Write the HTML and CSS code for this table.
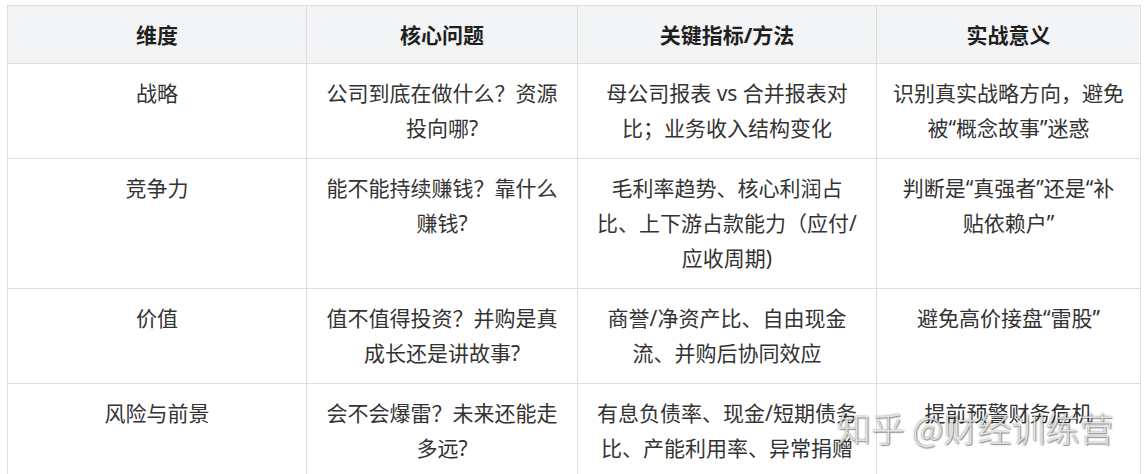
FILE: index.html
```html
<!DOCTYPE html>
<html lang="zh-CN">
<head>
<meta charset="utf-8">
<title>财务分析维度</title>
<link rel="stylesheet" href="styles.css">
</head>
<body>
<div class="page">
  <table class="grid">
    <colgroup>
      <col class="c1"><col class="c2"><col class="c3"><col class="c4">
    </colgroup>
    <thead>
      <tr><th>维度</th><th>核心问题</th><th>关键指标/方法</th><th>实战意义</th></tr>
    </thead>
    <tbody>
      <tr>
        <td>战略</td>
        <td>公司到底在做什么？资源<br>投向哪?</td>
        <td>母公司报表 vs 合并报表对<br>比；业务收入结构变化</td>
        <td>识别真实战略方向，避免<br>被“概念故事”迷惑</td>
      </tr>
      <tr>
        <td>竞争力</td>
        <td>能不能持续赚钱？靠什么<br>赚钱?</td>
        <td>毛利率趋势、核心利润占<br>比、上下游占款能力（应付/<br>应收周期)</td>
        <td>判断是“真强者”还是“补<br>贴依赖户”</td>
      </tr>
      <tr>
        <td>价值</td>
        <td>值不值得投资？并购是真<br>成长还是讲故事?</td>
        <td>商誉/净资产比、自由现金<br>流、并购后协同效应</td>
        <td>避免高价接盘“雷股”</td>
      </tr>
      <tr>
        <td>风险与前景</td>
        <td>会不会爆雷？未来还能走<br>多远?</td>
        <td>有息负债率、现金/短期债务<br>比、产能利用率、异常捐赠</td>
        <td>提前预警财务危机</td>
      </tr>
    </tbody>
  </table>
  <div class="watermark">知乎 @财经训练营</div>
</div>
</body>
</html>
```

FILE: styles.css
```css
html, body {
  margin: 0;
  padding: 0;
  background: #ffffff;
}

.page {
  position: relative;
  padding: 5px 0 0 7px;
  height: 469px;
  overflow: hidden;
  font-family: "Noto Sans", "Noto Sans CJK SC", sans-serif;
}

.grid {
  border-collapse: collapse;
  table-layout: fixed;
  width: 1133px;
  font-size: 21px;
  line-height: 35px;
  color: #333333;
}

.c1 { width: 299px; }
.c2 { width: 271px; }
.c3 { width: 299px; }
.c4 { width: 264px; }

.grid th,
.grid td {
  border: 1px solid #dedede;
  text-align: center;
  vertical-align: top;
  padding: 12px 12px;
}

.grid th {
  background: #f3f4f5;
  color: #1f1f1f;
  font-weight: 700;
  padding: 12px 12px 10px;
}

.watermark {
  position: absolute;
  left: 837px;
  top: 408px;
  font-family: "Noto Sans CJK SC", sans-serif;
  font-size: 34px;
  line-height: 40px;
  font-weight: 300;
  white-space: nowrap;
  color: rgba(240, 240, 240, 0.85);
  text-shadow: 0 0 2px rgba(0, 0, 0, 0.5), 1px 1px 1px rgba(0, 0, 0, 0.35);
}
```
